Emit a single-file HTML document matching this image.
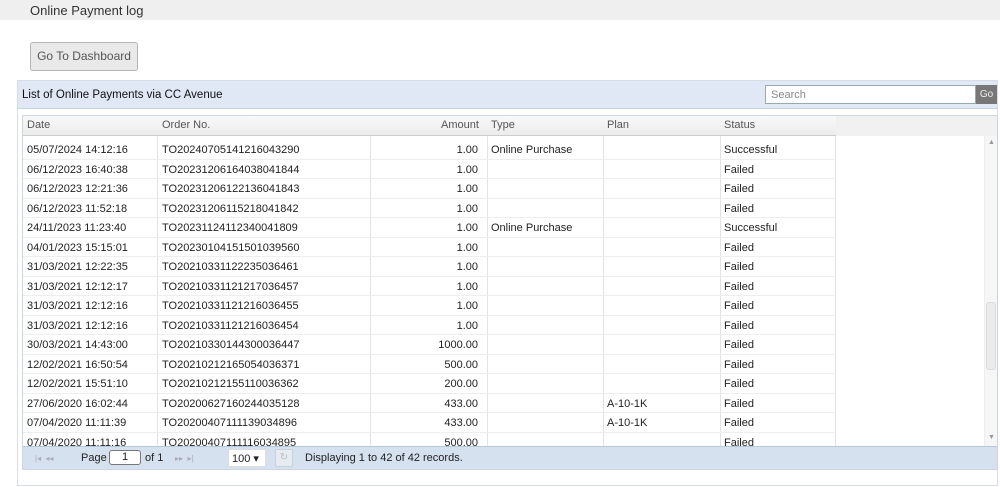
<!DOCTYPE html>
<html><head><style>
*{margin:0;padding:0;box-sizing:border-box}
body{width:1000px;height:487px;background:#fff;font-family:"Liberation Sans",Arial,sans-serif;position:relative;overflow:hidden}
.top{position:absolute;left:0;top:0;width:1000px;height:20px;background:#efefef}
.top span{position:absolute;left:30px;top:3px;font-size:13px;color:#333}
.btn{position:absolute;left:30px;top:42px;width:108px;height:29px;border:1px solid #b5b5b5;border-radius:3px;background:#e9e9e9;font-size:12px;color:#555;text-align:center;line-height:27px}
.panel{position:absolute;left:17px;top:80px;width:981px;height:406px;border:1px solid #d6dde6}
.ph{position:absolute;left:0;top:0;width:979px;height:28px;background:#e0e8f5;border-bottom:1px solid #c5d3e6}
.ph span{position:absolute;left:4px;top:8px;font-size:11.5px;color:#111}
.search{position:absolute;left:747px;top:4px;width:211px;height:19px;border:1px solid #9aa;background:#fff;font-size:11px;color:#888;padding:3px 5px}
.go{position:absolute;left:958px;top:4px;width:21px;height:19px;background:#777;color:#eee;font-size:10px;text-align:center;line-height:19px}
.grid{position:absolute;left:22px;top:115px;width:976px;height:355px;border:1px solid #cdd6e0;overflow:hidden}
.hdr{position:absolute;left:0;top:0;width:974px;height:20px;background:linear-gradient(#f9f9f9,#ececec);border-bottom:1px solid #ccc}
.hdr div,.row div{position:absolute;top:0;font-size:11px;color:#222;white-space:nowrap}
.hdr div{color:#555;top:3px}
.hdr .x{left:813px;top:0;width:161px;height:20px;background:#f1f1f1}
.row{position:absolute;left:0;width:813px;height:19.5px;border-bottom:1px solid #eee}
.row div{top:4px}
.vl{position:absolute;top:20px;width:1px;height:315px;background:#e3e3e3}
.sb{position:absolute;left:961px;top:20px;width:13px;height:310px;background:#f6f6f6;border-left:1px solid #eee}
.th{position:absolute;left:963px;top:186px;width:10px;height:68px;background:#eaeaea;border:1px solid #ddd;border-radius:3px}
.pager{position:absolute;left:0;top:330px;width:974px;height:24px;background:#d6e1ef;border-top:1px solid #b8c8dc;font-size:11px;color:#222}
.pager span{position:absolute;top:5px}
</style></head><body>
<div class="top"><span>Online Payment log</span></div>
<div class="btn">Go To Dashboard</div>
<div class="panel"><div class="ph"><span>List of Online Payments via CC Avenue</span><div class="search">Search</div><div class="go">Go</div></div></div>
<div class="grid">
<div class="hdr"><div style="left:4px">Date</div><div style="left:139px">Order No.</div><div style="left:418px">Amount</div><div style="left:468px">Type</div><div style="left:584px">Plan</div><div style="left:701px">Status</div><div class="x"></div></div>
<div class="vl" style="left:134px"></div><div class="vl" style="left:347px"></div><div class="vl" style="left:464px"></div><div class="vl" style="left:580px"></div><div class="vl" style="left:697px"></div><div class="vl" style="left:812px"></div>
<div class="row" style="top:24px"><div style="left:4px">05/07/2024 14:12:16</div><div style="left:139px">TO20240705141216043290</div><div style="right:358px">1.00</div><div style="left:468px">Online Purchase</div><div style="left:701px">Successful</div></div>
<div class="row" style="top:43.5px"><div style="left:4px">06/12/2023 16:40:38</div><div style="left:139px">TO20231206164038041844</div><div style="right:358px">1.00</div><div style="left:701px">Failed</div></div>
<div class="row" style="top:63px"><div style="left:4px">06/12/2023 12:21:36</div><div style="left:139px">TO20231206122136041843</div><div style="right:358px">1.00</div><div style="left:701px">Failed</div></div>
<div class="row" style="top:82.5px"><div style="left:4px">06/12/2023 11:52:18</div><div style="left:139px">TO20231206115218041842</div><div style="right:358px">1.00</div><div style="left:701px">Failed</div></div>
<div class="row" style="top:102px"><div style="left:4px">24/11/2023 11:23:40</div><div style="left:139px">TO20231124112340041809</div><div style="right:358px">1.00</div><div style="left:468px">Online Purchase</div><div style="left:701px">Successful</div></div>
<div class="row" style="top:121.5px"><div style="left:4px">04/01/2023 15:15:01</div><div style="left:139px">TO20230104151501039560</div><div style="right:358px">1.00</div><div style="left:701px">Failed</div></div>
<div class="row" style="top:141px"><div style="left:4px">31/03/2021 12:22:35</div><div style="left:139px">TO20210331122235036461</div><div style="right:358px">1.00</div><div style="left:701px">Failed</div></div>
<div class="row" style="top:160.5px"><div style="left:4px">31/03/2021 12:12:17</div><div style="left:139px">TO20210331121217036457</div><div style="right:358px">1.00</div><div style="left:701px">Failed</div></div>
<div class="row" style="top:180px"><div style="left:4px">31/03/2021 12:12:16</div><div style="left:139px">TO20210331121216036455</div><div style="right:358px">1.00</div><div style="left:701px">Failed</div></div>
<div class="row" style="top:199.5px"><div style="left:4px">31/03/2021 12:12:16</div><div style="left:139px">TO20210331121216036454</div><div style="right:358px">1.00</div><div style="left:701px">Failed</div></div>
<div class="row" style="top:219px"><div style="left:4px">30/03/2021 14:43:00</div><div style="left:139px">TO20210330144300036447</div><div style="right:358px">1000.00</div><div style="left:701px">Failed</div></div>
<div class="row" style="top:238.5px"><div style="left:4px">12/02/2021 16:50:54</div><div style="left:139px">TO20210212165054036371</div><div style="right:358px">500.00</div><div style="left:701px">Failed</div></div>
<div class="row" style="top:258px"><div style="left:4px">12/02/2021 15:51:10</div><div style="left:139px">TO20210212155110036362</div><div style="right:358px">200.00</div><div style="left:701px">Failed</div></div>
<div class="row" style="top:277.5px"><div style="left:4px">27/06/2020 16:02:44</div><div style="left:139px">TO20200627160244035128</div><div style="right:358px">433.00</div><div style="left:584px">A-10-1K</div><div style="left:701px">Failed</div></div>
<div class="row" style="top:297px"><div style="left:4px">07/04/2020 11:11:39</div><div style="left:139px">TO20200407111139034896</div><div style="right:358px">433.00</div><div style="left:584px">A-10-1K</div><div style="left:701px">Failed</div></div>
<div class="row" style="top:316.5px"><div style="left:4px">07/04/2020 11:11:16</div><div style="left:139px">TO20200407111116034895</div><div style="right:358px">500.00</div><div style="left:701px">Failed</div></div>
<div class="sb"><div style="position:absolute;left:3px;top:3px;font-size:7px;color:#999">▲</div><div style="position:absolute;left:3px;top:298px;font-size:7px;color:#999">▼</div></div><div class="th"></div>
<div class="pager">
<span style="left:12px;color:#aab;font-size:8px;top:7px">|◂ &nbsp;◂◂</span>
<span style="left:58px">Page</span>
<span style="left:86px;top:3px;width:32px;height:15px;border:1px solid #777;border-radius:3px;background:#fff;text-align:center;line-height:13px">1</span>
<span style="left:122px">of 1</span>
<span style="left:152px;color:#aab;font-size:8px;top:7px">▸▸ &nbsp;▸|</span>
<span style="left:205px;top:2px;width:38px;height:18px;background:#fff;border:1px solid #ddd;padding:2px 3px">100 ▾</span>
<span style="left:252px;top:2px;width:18px;height:18px;background:#e6ebf2;border:1px solid #c8d2df;color:#bbb;text-align:center;font-size:10px;line-height:16px">↻</span>
<span style="left:282px">Displaying 1 to 42 of 42 records.</span>
</div>
</div>
</body></html>
